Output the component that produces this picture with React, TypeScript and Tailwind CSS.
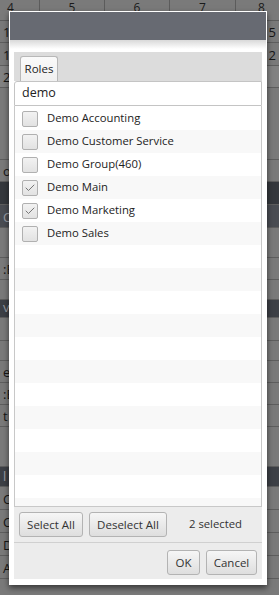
import { Check } from 'lucide-react';

const roles = [
  { name: 'Demo Accounting', checked: false },
  { name: 'Demo Customer Service', checked: false },
  { name: 'Demo Group(460)', checked: false },
  { name: 'Demo Main', checked: true },
  { name: 'Demo Marketing', checked: true },
  { name: 'Demo Sales', checked: false },
];

const font = { fontFamily: '"Open Sans", "Noto Sans", sans-serif' };

const bgRows = [
  { h: 22, left: '1', right: '5', tone: 'bg-[#7a7a7a]' },
  { h: 23, left: '1', right: '2', tone: 'bg-[#7a7a7a]' },
  { h: 22, left: '2', right: '', tone: 'bg-[#828282]' },
  { h: 72, left: '', right: '', tone: 'bg-[#7a7a7a]' },
  { h: 22, left: 'o C', right: '', tone: 'bg-[#7a7a7a]' },
  { h: 23, left: '', right: '', tone: 'bg-[#35383d]' },
  { h: 23, left: 'Cr', right: '', tone: 'bg-[#4a4d53]' },
  { h: 30, left: '', right: '', tone: 'bg-[#7a7a7a]' },
  { h: 22, left: ':E', right: '', tone: 'bg-[#7a7a7a]' },
  { h: 20, left: '', right: '', tone: 'bg-[#7a7a7a]' },
  { h: 18, left: 've', right: '', tone: 'bg-[#3d4046]' },
  { h: 23, left: '', right: '', tone: 'bg-[#7a7a7a]' },
  { h: 20, left: '', right: '', tone: 'bg-[#7a7a7a]' },
  { h: 22, left: 'es', right: '', tone: 'bg-[#7a7a7a]' },
  { h: 22, left: ':E', right: '', tone: 'bg-[#7a7a7a]' },
  { h: 22, left: 't', right: '', tone: 'bg-[#7a7a7a]' },
  { h: 40, left: '', right: '', tone: 'bg-[#7a7a7a]' },
  { h: 20, left: 'l', right: '', tone: 'bg-[#3d4046]' },
  { h: 23, left: 'Co', right: '', tone: 'bg-[#7a7a7a]' },
  { h: 23, left: 'Co', right: '', tone: 'bg-[#7a7a7a]' },
  { h: 23, left: 'Do', right: '', tone: 'bg-[#7a7a7a]' },
  { h: 23, left: 'A', right: '', tone: 'bg-[#7a7a7a]' },
  { h: 30, left: '', right: '', tone: 'bg-[#7a7a7a]' },
];

const Button = ({ label, className = '' }: { label: string; className?: string }) => (
  <button
    className={`h-[25px] rounded-[3px] border border-[#b3b3b3] bg-gradient-to-b from-[#f6f6f6] to-[#dedede] text-[11.5px] text-[#333] ${className}`}
  >
    {label}
  </button>
);

const App = () => {
  return (
    <div className="relative h-[595px] w-[279px] overflow-hidden bg-[#7a7a7a] text-[#222]" style={font}>
      {/* dimmed page behind the dialog */}
      <div className="flex flex-col">
        <div className="grid h-[21px] grid-cols-[40px_65px_65px_66px_43px] border-b border-[#5c5c5c] text-[12px] text-[#1a1a1a]">
          <span className="border-r border-[#5c5c5c] pl-[7px] pt-[1px] leading-[13px]">4</span>
          <span className="border-r border-[#5c5c5c] pt-[1px] text-center leading-[13px]">5</span>
          <span className="border-r border-[#5c5c5c] pt-[1px] text-center leading-[13px]">6</span>
          <span className="border-r border-[#5c5c5c] pt-[1px] text-center leading-[13px]">7</span>
          <span className="pl-[22px] pt-[1px] leading-[13px]">8</span>
        </div>
        {bgRows.map((r, i) => (
          <div
            key={i}
            className={`flex items-end justify-between border-b border-[#5e5e5e] px-[3px] pb-[2px] text-[13px] ${r.tone} ${r.tone === 'bg-[#7a7a7a]' || r.tone === 'bg-[#828282]' ? 'text-[#151515]' : 'text-[#9a9da3]'}`}
            style={{ height: r.h }}
          >
            <span className="leading-[15px]">{r.left}</span>
            <span className="leading-[15px]">{r.right}</span>
          </div>
        ))}
      </div>

      {/* dialog */}
      <div className="absolute left-[9px] top-[11px] flex h-[574px] w-[258px] flex-col bg-white p-[1px] shadow-[0_3px_6px_rgba(0,0,0,0.55)]">
        <div className="h-[28px] shrink-0 bg-[#676a72]" />
        <div className="h-[9px] shrink-0 bg-gradient-to-b from-[#d9d9d9] to-white" />
        <div className="flex min-h-0 flex-1 flex-col px-[4px] pb-[5px] pt-[3px]">
          {/* tab bar */}
          <div className="flex h-[29px] shrink-0 items-end bg-[#dcdcdc] px-[6px]">
            <div className="flex h-[25px] w-[38px] items-center justify-center rounded-t-[3px] border border-b-0 border-[#b8b8b8] bg-gradient-to-b from-[#fafafa] to-[#f0f0f0] text-[11.5px] text-[#222]">
              Roles
            </div>
          </div>
          {/* search */}
          <div className="flex h-[25px] shrink-0 items-center rounded-tl-[3px] border border-[#c4c4c4] bg-white pl-[7px] text-[12.5px] text-[#222]">
            demo
          </div>
          {/* list */}
          <div className="flex min-h-0 flex-1 flex-col overflow-hidden border-x border-b border-[#c8c8c8] bg-white pt-[1px]">
            {Array.from({ length: 18 }).map((_, i) => {
              const role = roles[i];
              return (
                <div
                  key={i}
                  className={`flex h-[23px] shrink-0 items-center gap-[9px] pl-[7px] ${i % 2 === 1 ? 'bg-[#f8f8f8]' : 'bg-white'}`}
                >
                  {role && (
                    <>
                      <span className="flex h-[16px] w-[16px] items-center justify-center rounded-[2px] border border-[#b0b0b0] bg-gradient-to-b from-[#f2f2f2] to-[#e2e2e2]">
                        {role.checked && <Check size={12} strokeWidth={1.75} className="text-[#666]" />}
                      </span>
                      <span className="text-[11.3px] text-[#222]">{role.name}</span>
                    </>
                  )}
                </div>
              );
            })}
          </div>
          {/* footer */}
          <div className="flex shrink-0 flex-col bg-[#ececec]">
            <div className="flex h-[36px] items-center gap-[6px] border-b border-[#d0d0d0] px-[5px]">
              <Button label="Select All" className="w-[64px]" />
              <Button label="Deselect All" className="w-[78px]" />
              <span className="ml-[16px] text-[11.3px] text-[#333]">2 selected</span>
            </div>
            <div className="flex h-[36px] items-start justify-end gap-[6px] pr-[5px] pt-[7px]">
              <Button label="OK" className="w-[33px]" />
              <Button label="Cancel" className="w-[51px]" />
            </div>
          </div>
        </div>
      </div>
    </div>
  );
};

export default App;
